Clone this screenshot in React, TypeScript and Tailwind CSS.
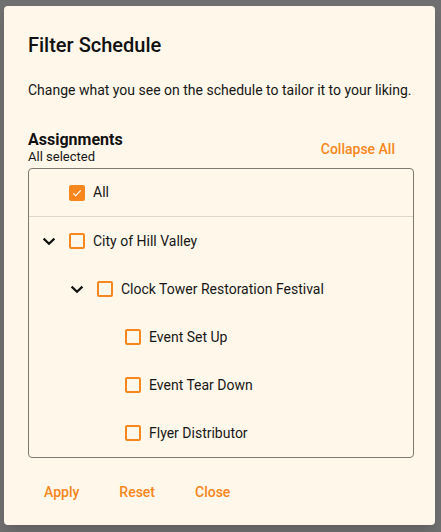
import React from "react";

interface Node {
  label: string;
  level: number;
  expandable?: boolean;
}

const nodes: Node[] = [
  { label: "City of Hill Valley", level: 0, expandable: true },
  { label: "Clock Tower Restoration Festival", level: 1, expandable: true },
  { label: "Event Set Up", level: 2 },
  { label: "Event Tear Down", level: 2 },
  { label: "Flyer Distributor", level: 2 },
];

const indent = ["pl-3", "pl-[40px]", "pl-[68px]"];

const Chevron = () => (
  <svg viewBox="0 0 16 16" className="w-4 h-4 text-[#111]" fill="none" stroke="currentColor" strokeWidth="2.2">
    <path d="M2.6 5.6 8 10.8l5.4-5.2" />
  </svg>
);

const Checkbox: React.FC<{ checked?: boolean }> = ({ checked }) =>
  checked ? (
    <span className="w-4 h-4 rounded-[2px] bg-[#f7861c] flex items-center justify-center">
      <svg viewBox="0 0 16 16" className="w-3 h-3" fill="none" stroke="#fff" strokeWidth="1.6">
        <path d="M3 8.5 6.3 11.5 13 4.5" />
      </svg>
    </span>
  ) : (
    <span className="w-4 h-4 rounded-[2px] border-2 border-[#f7861c] box-border" />
  );

const App: React.FC = () => (
  <div className="w-[441px] h-[532px] bg-[#6f6f6f] pt-[6px] pl-1 font-['Roboto',sans-serif] text-[#161616]">
    <div className="w-[431px] h-[519px] bg-[#fff8ea] rounded-[4px] shadow-lg px-6 pt-6 flex flex-col">
      <h2 className="text-[20px] leading-[30px] font-medium text-[#111]">Filter Schedule</h2>
      <p className="mt-[20px] text-[14px] leading-[20px] whitespace-nowrap">
        Change what you see on the schedule to tailor it to your liking.
      </p>
      <div className="mt-[30px] flex items-end justify-between">
        <div>
          <div className="text-[16px] leading-[20px] font-bold text-[#111]">Assignments</div>
          <div className="text-[13px] leading-[14px]">All selected</div>
        </div>
        <button type="button" className="text-[14px] font-medium text-[#f7861c] mr-[16px] mb-[4px]">
          Collapse All
        </button>
      </div>
      <div className="mt-[4px] border border-[#807870] rounded-[4px] w-[386px]">
        <div className="h-12 flex items-center gap-2 pl-[40px] border-b border-[#ddd6cc] text-[14px]">
          <Checkbox checked />
          <span>All</span>
        </div>
        {nodes.map((n) => (
          <div key={n.label} className={`h-12 flex items-center ${indent[n.level]}`}>
            <span className="w-4 mr-3 flex items-center justify-center">{n.expandable && <Chevron />}</span>
            <Checkbox />
            <span className="ml-2 text-[14px]">{n.label}</span>
          </div>
        ))}
      </div>
      <div className="mt-[20px] flex gap-2">
        {["Apply", "Reset", "Close"].map((b) => (
          <button key={b} type="button" className="px-4 py-1 text-[14px] font-medium text-[#f7861c]">
            {b}
          </button>
        ))}
      </div>
    </div>
  </div>
);

export default App;
